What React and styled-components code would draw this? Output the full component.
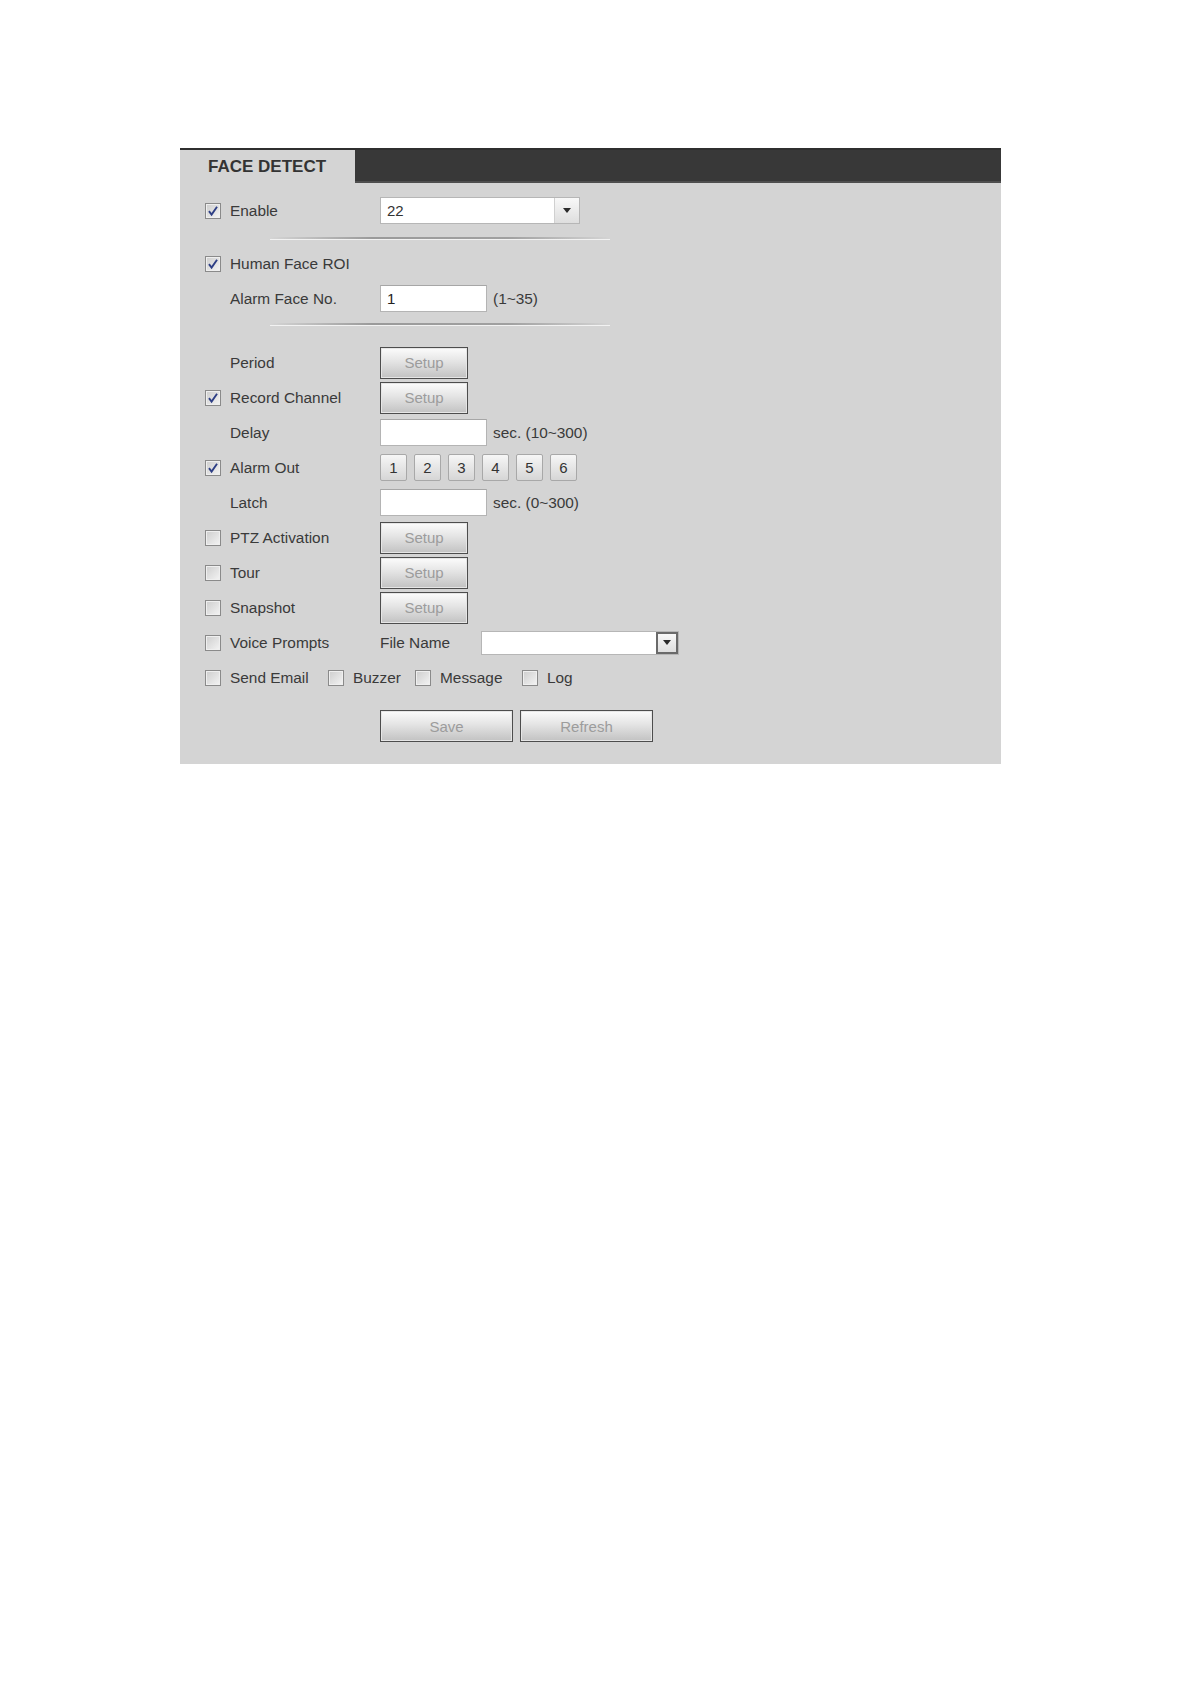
import React from 'react';
import styled, { createGlobalStyle } from 'styled-components';

const GlobalStyle = createGlobalStyle`
  body {
    margin: 0;
    background: #ffffff;
    font-family: "Liberation Sans", Arial, sans-serif;
  }
`;

const Page = styled.div`
  padding: 148px 0 120px 180px;
`;

const Panel = styled.div`
  width: 821px;
  background: #d4d4d4;
`;

const Header = styled.div`
  display: flex;
  height: 35px;
  border-top: 2px solid #2f2f2f;
  box-sizing: border-box;
`;

const Tab = styled.div`
  width: 175px;
  padding-left: 28px;
  box-sizing: border-box;
  display: flex;
  align-items: center;
  font-size: 17px;
  font-weight: bold;
  color: #333333;
  background: #d4d4d4;
`;

const HeaderFill = styled.div`
  flex: 1;
  background: #383838;
  border-bottom: 2px solid #4e4e4e;
`;

const Body = styled.div`
  padding: 10px 0 22px;
`;

const Row = styled.div`
  display: flex;
  align-items: center;
  height: 35px;
  padding-left: 25px;
  font-size: 15.4px;
  color: #3a3a3a;
`;

const CheckSlot = styled.div`
  width: 25px;
  flex: none;
`;

const Box = styled.span`
  display: inline-flex;
  align-items: center;
  justify-content: center;
  width: 16px;
  height: 16px;
  box-sizing: border-box;
  border: 1px solid #8a8a8a;
  background: linear-gradient(135deg, #cdcdcd 0%, #f4f4f4 100%);
  box-shadow: inset 0 0 0 1px #efefef;
  vertical-align: middle;
  flex: none;
`;

const Label = styled.div`
  width: 150px;
  flex: none;
  white-space: nowrap;
`;

const SelectBox = styled.div`
  display: flex;
  width: ${p => p.$width}px;
  height: ${p => p.$height}px;
  box-sizing: border-box;
  border: 1px solid #b6b6b6;
  background: #ffffff;
`;

const SelectValue = styled.div`
  flex: 1;
  padding-left: 6px;
  display: flex;
  align-items: center;
  font-size: 15px;
  color: #333;
`;

const SelectArrow = styled.div`
  width: ${p => (p.$dark ? 18 : 24)}px;
  display: flex;
  align-items: center;
  justify-content: center;
  border-left: 1px solid #d0d0d0;
  background: linear-gradient(#f8f8f8, #dedede);
  ${p => p.$dark && 'border: 2px solid #6a6a6a;'}
`;

const Triangle = styled.span`
  width: 0;
  height: 0;
  border-left: 4px solid transparent;
  border-right: 4px solid transparent;
  border-top: 5px solid #2a2a2a;
`;

const TextInput = styled.div`
  width: 107px;
  height: 27px;
  box-sizing: border-box;
  border: 1px solid #b4b4b4;
  border-top-color: #a6a6a6;
  background: #ffffff;
  padding-left: 6px;
  display: flex;
  align-items: center;
  font-size: 15px;
  color: #222;
`;

const Hint = styled.span`
  margin-left: 6px;
  white-space: nowrap;
`;

const GrayButton = styled.button`
  width: ${p => p.$width}px;
  height: 32px;
  padding: 0;
  border: 1px solid #4d4d4d;
  box-shadow: inset 0 0 0 1px #e6e6e6;
  background: linear-gradient(#fcfcfc 0%, #e4e4e4 45%, #c2c2c2 100%);
  font-family: "Liberation Sans", Arial, sans-serif;
  font-size: 15px;
  color: #9c9c9c;
`;

const NumberGroup = styled.div`
  display: flex;
  gap: 7px;
`;

const NumberButton = styled.button`
  width: 27px;
  height: 27px;
  padding: 0;
  border: 1px solid #a8a8a8;
  border-radius: 2px;
  background: linear-gradient(#f6f6f6, #d6d6d6);
  font-family: "Liberation Sans", Arial, sans-serif;
  font-size: 15px;
  color: #333;
`;

const Separator = styled.div`
  width: 340px;
  height: 2px;
  margin: ${p => p.$top}px 0 ${p => p.$bottom}px 90px;
  background: linear-gradient(90deg, rgba(150,150,150,0) 0%, #9a9a9a 30%, #a0a0a0 70%, rgba(150,150,150,0) 100%);
  box-shadow: 0 1px 0 rgba(255,255,255,0.7);
`;

const CheckItem = styled.div`
  display: flex;
  align-items: center;
  gap: 9px;
  width: ${p => p.$width}px;
  flex: none;
  white-space: nowrap;
`;

const FileLabel = styled.div`
  width: 101px;
  flex: none;
`;

const ButtonRow = styled.div`
  display: flex;
  gap: 7px;
  margin: 15px 0 0 200px;
`;

function Check({ checked }) {
  return (
    <Box>
      {checked && (
        <svg width="12" height="12" viewBox="0 0 11 11">
          <path d="M1.8 5.6 L4.2 8.8 L9.2 1.6" fill="none" stroke="#2e3f85" strokeWidth="1.7" />
        </svg>
      )}
    </Box>
  );
}

function FormRow({ check, checked, label, children }) {
  return (
    <Row>
      <CheckSlot>{check && <Check checked={checked} />}</CheckSlot>
      <Label>{label}</Label>
      {children}
    </Row>
  );
}

export default function App() {
  return (
    <Page>
      <GlobalStyle />
      <Panel>
        <Header>
          <Tab>FACE DETECT</Tab>
          <HeaderFill />
        </Header>
        <Body>
          <FormRow check checked label="Enable">
            <SelectBox $width={200} $height={27}>
              <SelectValue>22</SelectValue>
              <SelectArrow><Triangle /></SelectArrow>
            </SelectBox>
          </FormRow>
          <Separator $top={9} $bottom={7} />
          <FormRow check checked label="Human Face ROI" />
          <FormRow label="Alarm Face No.">
            <TextInput>1</TextInput>
            <Hint>(1~35)</Hint>
          </FormRow>
          <Separator $top={7} $bottom={20} />
          <FormRow label="Period">
            <GrayButton $width={88}>Setup</GrayButton>
          </FormRow>
          <FormRow check checked label="Record Channel">
            <GrayButton $width={88}>Setup</GrayButton>
          </FormRow>
          <FormRow label="Delay">
            <TextInput />
            <Hint>sec. (10~300)</Hint>
          </FormRow>
          <FormRow check checked label="Alarm Out">
            <NumberGroup>
              {[1, 2, 3, 4, 5, 6].map(n => (
                <NumberButton key={n}>{n}</NumberButton>
              ))}
            </NumberGroup>
          </FormRow>
          <FormRow label="Latch">
            <TextInput />
            <Hint>sec. (0~300)</Hint>
          </FormRow>
          <FormRow check label="PTZ Activation">
            <GrayButton $width={88}>Setup</GrayButton>
          </FormRow>
          <FormRow check label="Tour">
            <GrayButton $width={88}>Setup</GrayButton>
          </FormRow>
          <FormRow check label="Snapshot">
            <GrayButton $width={88}>Setup</GrayButton>
          </FormRow>
          <FormRow check label="Voice Prompts">
            <FileLabel>File Name</FileLabel>
            <SelectBox $width={198} $height={24}>
              <SelectValue />
              <SelectArrow $dark><Triangle /></SelectArrow>
            </SelectBox>
          </FormRow>
          <Row>
            <CheckItem $width={123}><Check />Send Email</CheckItem>
            <CheckItem $width={87}><Check />Buzzer</CheckItem>
            <CheckItem $width={107}><Check />Message</CheckItem>
            <CheckItem $width={60}><Check />Log</CheckItem>
          </Row>
          <ButtonRow>
            <GrayButton $width={133}>Save</GrayButton>
            <GrayButton $width={133}>Refresh</GrayButton>
          </ButtonRow>
        </Body>
      </Panel>
    </Page>
  );
}
